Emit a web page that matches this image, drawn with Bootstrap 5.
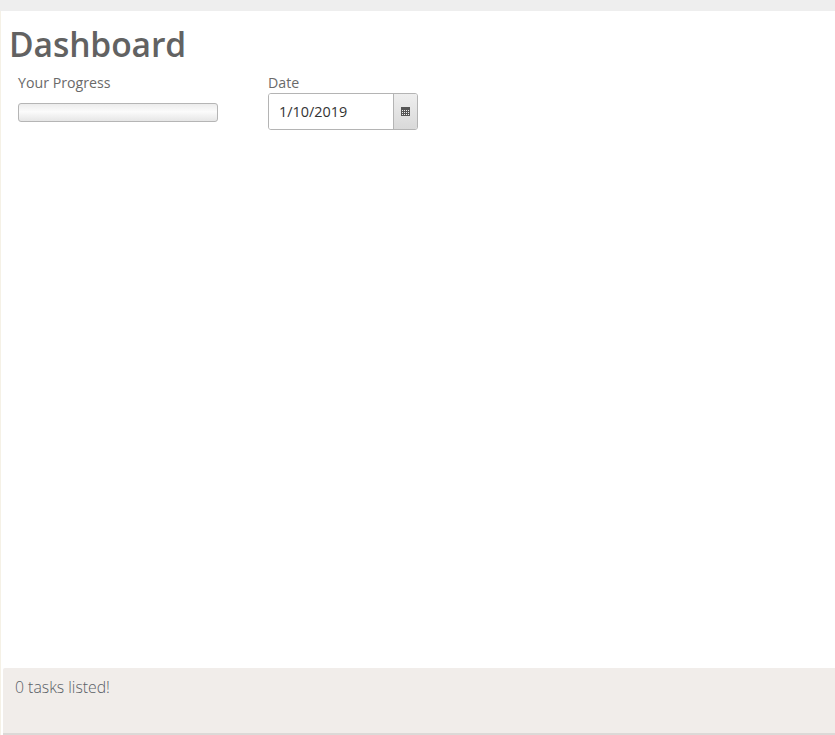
<!doctype html>
<html lang="en">
<head>
  <title>Dashboard</title>
  <meta charset="utf-8" />
  <meta name="viewport" content="width=device-width, initial-scale=1" />
  <link href="https://cdn.jsdelivr.net/npm/bootstrap@5.3.2/dist/css/bootstrap.min.css" rel="stylesheet" />
  <style>
    html, body { height: 100%; }
    body { font-family: "Open Sans", "Noto Sans", sans-serif; color: #666; background: #fff; overflow: hidden; }
    .top-strip { height: 11px; background: #eeeeee; flex: none; }
    .page-body { flex: 1; min-height: 0; border-left: 1px solid #f5f1e6; }
    .dash-title { font-size: 33.6px; font-weight: 600; line-height: 46px; color: #626262; margin: 10px 0 0 8px; letter-spacing: -.1px; }
    .field-row { margin: 0 0 0 17px; gap: 50px; }
    .field-label { font-size: 14.2px; line-height: 18px; margin: 7px 0 1px; font-weight: 500; color: #6a6a6a; }
    .field-box { width: 200px; }
    .field-box.date-box { width: 150px; }
    .prog-track { width: 200px; height: 19px; margin: 11px 0 0; border: 1px solid #b5b5b5; border-radius: 3px; background: linear-gradient(#ececec, #fbfbfb 45%, #e6e6e6); }
    .date-group { height: 37px; border: 1px solid #b4b4b4; border-radius: 3px; overflow: hidden; }
    .date-value { flex: 1; padding-left: 10px; font-size: 14.4px; font-weight: 500; line-height: 35px; color: #333; background: #fff; }
    .date-btn { width: 24px; border-left: 1px solid #b4b4b4; background: linear-gradient(#eeeeee, #d9d9d9); }
    .tasks-foot { height: 67px; margin-left: 2px; padding: 9px 12px; background: #f1edea; border-bottom: 2px solid #dcd9d7; border-top-left-radius: 2px; font-size: 15.8px; font-weight: 300; line-height: 21px; color: #5a6066; flex: none; }
  </style>
</head>
<body class="d-flex flex-column">

  <div class="top-strip"></div>

  <div class="page-body d-flex flex-column">
    <h1 class="dash-title">Dashboard</h1>

    <div class="field-row d-flex">
      <div class="field-box">
        <div class="field-label">Your Progress</div>
        <div class="prog-track"></div>
      </div>
      <div class="field-box date-box">
        <div class="field-label">Date</div>
        <div class="date-group d-flex">
          <div class="date-value">1/10/2019</div>
          <div class="date-btn d-flex align-items-center justify-content-center">
            <svg width="9" height="9" viewBox="0 0 9 9">
              <rect width="9" height="9" fill="#555" />
              <g fill="#eee">
                <rect x="1" y="3" width="1" height="1" /><rect x="3" y="3" width="1" height="1" /><rect x="5" y="3" width="1" height="1" /><rect x="7" y="3" width="1" height="1" />
                <rect x="1" y="5" width="1" height="1" /><rect x="3" y="5" width="1" height="1" /><rect x="5" y="5" width="1" height="1" /><rect x="7" y="5" width="1" height="1" />
                <rect x="1" y="7" width="1" height="1" /><rect x="3" y="7" width="1" height="1" /><rect x="5" y="7" width="1" height="1" /><rect x="7" y="7" width="1" height="1" />
              </g>
            </svg>
          </div>
        </div>
      </div>
    </div>

    <div class="flex-grow-1"></div>

    <div class="tasks-foot">0 tasks listed!</div>
  </div>

  <script src="https://cdn.jsdelivr.net/npm/bootstrap@5.3.2/dist/js/bootstrap.bundle.min.js"></script>
</body>
</html>
